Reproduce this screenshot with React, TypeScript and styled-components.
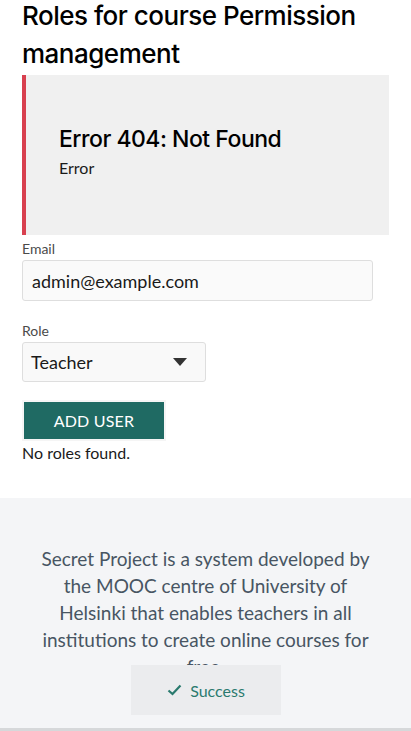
import React from "react";
import styled, { createGlobalStyle } from "styled-components";

const GlobalStyle = createGlobalStyle`
  html, body { margin: 0; padding: 0; background: #ffffff; }
  body { font-family: Lato, "Open Sans", sans-serif; color: #1a1a1a; overflow: hidden; }
  * { box-sizing: border-box; }
`;

const Page = styled.div`
  width: 411px;
  height: 731px;
  overflow: hidden;
  display: flex;
  flex-direction: column;
  position: relative;
`;

const Main = styled.main`
  padding: 0 22px;
  display: flex;
  flex-direction: column;
`;

const Title = styled.h1`
  margin: -3px 0 0 0;
  font-family: Inter, "Open Sans", sans-serif;
  font-weight: 500;
  font-size: 26px;
  line-height: 38px;
  letter-spacing: -0.5px;
  color: #000;
`;

const ErrorBox = styled.section`
  margin-top: 2px;
  width: 367px;
  height: 160px;
  background: #f0f0f0;
  border-left: 4px solid #d8404f;
  padding: 50px 0 0 33px;
  display: flex;
  flex-direction: column;
`;

const ErrorTitle = styled.h2`
  margin: 0;
  font-family: Inter, "Open Sans", sans-serif;
  font-weight: 500;
  font-size: 23px;
  line-height: 28px;
  letter-spacing: -0.5px;
  color: #000;
`;

const ErrorText = styled.div`
  margin-top: 5px;
  font-size: 16px;
  line-height: 20px;
  color: #1a1a1a;
`;

const Field = styled.label`
  display: flex;
  flex-direction: column;
  margin-top: ${(p: { $top: number }) => p.$top}px;
`;

const Label = styled.span`
  font-size: 14px;
  line-height: 17px;
  color: #4a4a4a;
  margin-bottom: 3px;
`;

const Input = styled.div`
  width: 351px;
  height: 41px;
  border: 1px solid #dedede;
  border-radius: 3px;
  background: #fafafa;
  padding: 0 9px;
  display: flex;
  align-items: center;
  font-size: 18px;
  color: #1a1a1a;
`;

const Select = styled.div`
  width: 184px;
  height: 40px;
  border: 1px solid #dedede;
  border-radius: 3px;
  background: #f9f9f9;
  padding: 0 18px 0 8px;
  display: flex;
  align-items: center;
  justify-content: space-between;
  font-size: 18px;
  color: #1a1a1a;
`;

const Caret = styled.span`
  width: 0;
  height: 0;
  border-left: 7px solid transparent;
  border-right: 7px solid transparent;
  border-top: 8px solid #333;
`;

const ButtonWrap = styled.div`
  margin-top: 18px;
  width: 144px;
  height: 41px;
  background: #f5f5f5;
  padding: 2px;
  display: flex;
`;

const Button = styled.button`
  flex: 1;
  height: 37px;
  border: none;
  background: #1f6a63;
  color: #fff;
  font-family: Lato, sans-serif;
  font-size: 16px;
  letter-spacing: 0.2px;
  cursor: pointer;
`;

const Empty = styled.p`
  margin: 2px 0 0 0;
  font-size: 16px;
  line-height: 20px;
  color: #1a1a1a;
`;

const Footer = styled.footer`
  margin-top: 35px;
  flex: 1;
  background: #f4f5f7;
  border-bottom: 3px solid #d6d8da;
  padding: 47px 36px 0;
  display: flex;
  justify-content: center;
  overflow: hidden;
`;

const FooterText = styled.p`
  margin: 0;
  text-align: center;
  font-size: 19px;
  line-height: 27px;
  color: #485563;
`;

const Toast = styled.div`
  position: absolute;
  left: 131px;
  bottom: 16px;
  width: 150px;
  height: 50px;
  background: #ebecee;
  display: flex;
  align-items: center;
  justify-content: center;
  gap: 8px;
  font-size: 16px;
  color: #2a7a6e;
`;

export default function App() {
  return (
    <>
      <GlobalStyle />
      <Page>
        <Main>
          <Title>Roles for course Permission management</Title>
          <ErrorBox>
            <ErrorTitle>Error 404: Not Found</ErrorTitle>
            <ErrorText>Error</ErrorText>
          </ErrorBox>
          <Field $top={5}>
            <Label>Email</Label>
            <Input>admin@example.com</Input>
          </Field>
          <Field $top={21}>
            <Label>Role</Label>
            <Select>
              <span>Teacher</span>
              <Caret />
            </Select>
          </Field>
          <ButtonWrap>
            <Button>ADD USER</Button>
          </ButtonWrap>
          <Empty>No roles found.</Empty>
        </Main>
        <Footer>
          <FooterText>
            Secret Project is a system developed by the MOOC centre of University of Helsinki that
            enables teachers in all institutions to create online courses for free.
          </FooterText>
        </Footer>
        <Toast>
          <svg width="15" height="12" viewBox="0 0 15 12" fill="none">
            <path d="M1.5 6.5 L5.5 10 L13.5 1.5" stroke="#2a7a6e" strokeWidth="2.2" />
          </svg>
          <span>Success</span>
        </Toast>
      </Page>
    </>
  );
}
